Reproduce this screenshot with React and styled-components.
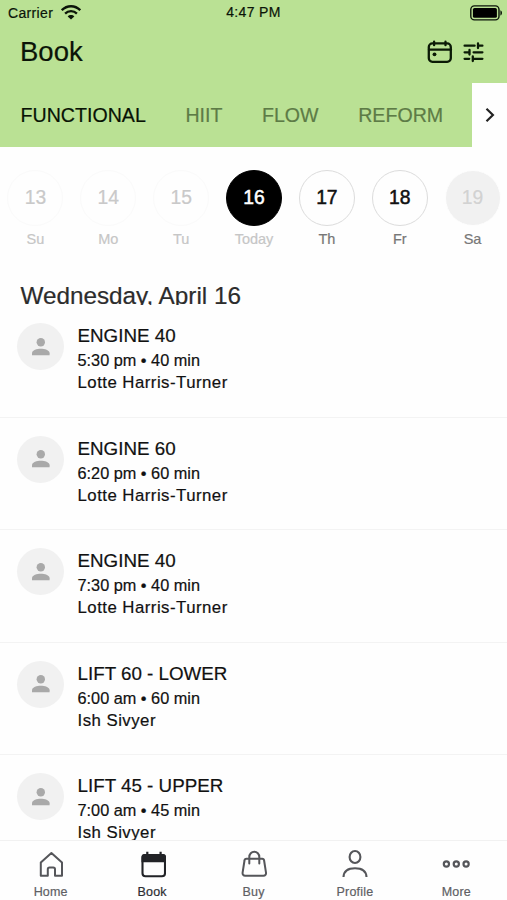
import React from 'react';
import styled, { createGlobalStyle } from 'styled-components';

const tabs = [
  { label: 'FUNCTIONAL', active: true },
  { label: 'HIIT' },
  { label: 'FLOW' },
  { label: 'REFORM' },
];

const days = [
  { date: 13, label: 'Su', variant: 'past' },
  { date: 14, label: 'Mo', variant: 'past' },
  { date: 15, label: 'Tu', variant: 'past' },
  { date: 16, label: 'Today', variant: 'selected' },
  { date: 17, label: 'Th', variant: 'open' },
  { date: 18, label: 'Fr', variant: 'open' },
  { date: 19, label: 'Sa', variant: 'closed' },
];

const classes = [
  { title: 'ENGINE 40', time: '5:30 pm • 40 min', coach: 'Lotte Harris-Turner' },
  { title: 'ENGINE 60', time: '6:20 pm • 60 min', coach: 'Lotte Harris-Turner' },
  { title: 'ENGINE 40', time: '7:30 pm • 40 min', coach: 'Lotte Harris-Turner' },
  { title: 'LIFT 60 - LOWER', time: '6:00 am • 60 min', coach: 'Ish Sivyer' },
  { title: 'LIFT 45 - UPPER', time: '7:00 am • 45 min', coach: 'Ish Sivyer' },
];

const WifiIcon = () => (
  <svg width="20" height="15" viewBox="0 0 20 15" fill="none" stroke="#0b1408" strokeWidth="2.3">
    <path d="M.8 5.2C6-.1 14-.1 19.2 5.2" />
    <path d="M4.1 8.6c3.3-3.3 8.5-3.3 11.8 0" />
    <path d="M10 14.6 6.7 11.4c1.7-1.8 4.9-1.8 6.6 0Z" fill="#0b1408" stroke="none" />
  </svg>
);

const BatteryIcon = () => (
  <svg width="33" height="16" viewBox="0 0 33 16">
    <rect x=".8" y=".9" width="28.2" height="14" rx="3.6" fill="none" stroke="#0b1408" strokeWidth="1.4" />
    <rect x="2.9" y="3" width="24" height="9.8" rx="1.6" fill="#000" />
    <path d="M30.4 5.2c2.1.7 2.1 4.7 0 5.4Z" fill="#0b1408" />
  </svg>
);

const CalendarIcon = () => (
  <svg width="26" height="24" viewBox="0 0 26 24" fill="none" stroke="#0b1a06" strokeWidth="2.3" strokeLinecap="round">
    <rect x="1.8" y="3.4" width="22" height="18.4" rx="3.6" />
    <path d="M2 9.7h22M7.1 1.7v3.5M18.5 1.7v3.5" />
    <circle cx="7.5" cy="14.3" r="1.9" fill="#0b1a06" stroke="none" />
  </svg>
);

const FilterIcon = () => (
  <svg width="21" height="21" viewBox="0 0 21 21" fill="none" stroke="#0b1a06" strokeWidth="2.3" strokeLinecap="round">
    <path d="M1.6 3.7h10M15 1.4v4.6M15 3.7h4.4" />
    <path d="M1.6 10.3h4.6M6.5 8v4.6M10.6 10.3h8.8" />
    <path d="M1.6 16.8h4.6M9.8 14.5v4.6M9.8 16.8h9.6" />
  </svg>
);

const ChevronIcon = () => (
  <svg width="12" height="16" viewBox="0 0 12 16" fill="none" stroke="#222" strokeWidth="2.2">
    <path d="m2.5 1.8 6.4 6.2-6.4 6.2" />
  </svg>
);

const PersonIcon = () => (
  <svg width="18" height="18" viewBox="0 0 18 18" fill="#a9a9a9">
    <circle cx="8.8" cy="4.2" r="4.2" />
    <path d="M0 17.2V15.2c0-3 5-4.4 8.8-4.4s8.8 1.4 8.8 4.4v2Z" />
  </svg>
);

const HomeIcon = () => (
  <svg width="28" height="30" viewBox="0 0 28 30" fill="none" stroke="#55565a" strokeWidth="2" strokeLinejoin="round">
    <path d="M3.8 13.6 14.4 4 25 13.600v13.200h-7v-6.600c0-1.200-.6-1.800-1.800-1.800h-3.600c-1.200 0-1.800.6-1.800 1.800v6.600h-7Z" />
  </svg>
);

const BookIcon = () => (
  <svg width="28" height="30" viewBox="0 0 28 30">
    <path d="M9.300 2.800v5M22.600 2.800v5" stroke="#222327" strokeWidth="2.2" />
    <path d="M3.500 13.200V8a3 3 0 0 1 3-3H25a3 3 0 0 1 3 3v5.200Z" fill="#222327" />
    <rect x="4.500" y="6" width="22.500" height="21.200" rx="3" fill="none" stroke="#222327" strokeWidth="2.1" />
  </svg>
);

const BuyIcon = () => (
  <svg width="28" height="30" viewBox="0 0 28 30" fill="none" stroke="#55565a" strokeWidth="2" strokeLinecap="round">
    <path d="M6.400 9.800h15.800c1 0 1.800.7 1.900 1.700l1.900 12.200c.2 1.800-.8 3-2.500 3H5.100c-1.700 0-2.700-1.200-2.500-3l1.900-12.200c.1-1 .9-1.700 1.900-1.700Z" />
    <path d="M9.300 14.500V8a5 5.300 0 0 1 10 0v6.500" />
  </svg>
);

const ProfileIcon = () => (
  <svg width="28" height="30" viewBox="0 0 28 30" fill="none" stroke="#55565a" strokeWidth="2.1">
    <ellipse cx="14" cy="8" rx="5.4" ry="6" />
    <path d="M2.500 28c.3-5.800 4.200-8.700 11.500-8.700S25.200 22.200 25.500 28" />
  </svg>
);

const MoreIcon = () => (
  <svg width="28" height="30" viewBox="0 0 28 30" fill="none" stroke="#55565a" strokeWidth="2.2">
    <circle cx="4.4" cy="15" r="2.6" />
    <circle cx="14.3" cy="15" r="2.6" />
    <circle cx="24.1" cy="15" r="2.6" />
  </svg>
);

const navItems = [
  { label: 'Home', Icon: HomeIcon },
  { label: 'Book', Icon: BookIcon, active: true },
  { label: 'Buy', Icon: BuyIcon },
  { label: 'Profile', Icon: ProfileIcon },
  { label: 'More', Icon: MoreIcon },
];

function App() {
  return (
    <Screen>
      <GlobalStyle />
      <Header>
        <StatusBar>
          <Carrier>
            <span>Carrier</span>
            <WifiIcon />
          </Carrier>
          <Clock>4:47 PM</Clock>
          <Battery>
            <BatteryIcon />
          </Battery>
        </StatusBar>
        <TitleBar>
          <Title>Book</Title>
          <Actions>
            <CalendarIcon />
            <FilterIcon />
          </Actions>
        </TitleBar>
        <TabBar>
          <Tabs>
            {tabs.map(({ label, active }) => (
              <Tab key={label} $active={active}>{label}</Tab>
            ))}
          </Tabs>
          <NextButton aria-label="More categories">
            <ChevronIcon />
          </NextButton>
        </TabBar>
      </Header>

      <Week>
        {days.map(({ date, label, variant }) => (
          <Day key={date}>
            <DayCircle $variant={variant}>{date}</DayCircle>
            <DayLabel $variant={variant}>{label}</DayLabel>
          </Day>
        ))}
      </Week>

      <DateHeading>Wednesday, April 16</DateHeading>

      <ClassList>
        {classes.map(({ title, time, coach }, index) => (
          <ClassRow key={index}>
            <Avatar>
              <PersonIcon />
            </Avatar>
            <div>
              <ClassTitle>{title}</ClassTitle>
              <ClassTime>{time}</ClassTime>
              <Coach>{coach}</Coach>
            </div>
          </ClassRow>
        ))}
      </ClassList>

      <BottomNav>
        {navItems.map(({ label, Icon, active }) => (
          <NavItem key={label} $active={active}>
            <Icon />
            {label}
          </NavItem>
        ))}
      </BottomNav>
    </Screen>
  );
}

const GlobalStyle = createGlobalStyle`
  * {
    box-sizing: border-box;
  }

  body {
    margin: 0;
    background: #fefefe;
    font-family: 'Liberation Sans', Arial, sans-serif;
    -webkit-text-stroke: 0.2px;
  }

  svg {
    display: block;
    flex-shrink: 0;
  }
`;

const Screen = styled.div`
  width: 100%;
  height: 900px;
  display: flex;
  flex-direction: column;
  overflow: hidden;
`;

const Header = styled.header`
  height: 147px;
  flex-shrink: 0;
  background: #bae194;
  color: #0b1408;
`;

const StatusBar = styled.div`
  height: 24px;
  display: grid;
  grid-template-columns: 1fr auto 1fr;
  align-items: center;
  padding: 1px 4px 0 8px;
  font-size: 14px;
  letter-spacing: 0.35px;
`;

const Carrier = styled.div`
  display: flex;
  align-items: center;
  gap: 8px;
`;

const Clock = styled.span`
  padding: 0 4px 2px 0;
  line-height: 14px;
`;

const Battery = styled.div`
  display: flex;
  justify-content: flex-end;
`;

const TitleBar = styled.div`
  height: 59px;
  display: flex;
  justify-content: space-between;
  padding: 12px 23px 0 20px;
`;

const Title = styled.h1`
  margin: 0;
  font-size: 27.5px;
  line-height: 32px;
  font-weight: 400;
`;

const Actions = styled.div`
  height: 32px;
  display: flex;
  align-items: center;
  gap: 10px;
`;

const TabBar = styled.nav`
  height: 64px;
  display: flex;
  justify-content: space-between;
`;

const Tabs = styled.div`
  display: flex;
  align-items: center;
  gap: 39.6px;
  padding-left: 20.6px;
`;

const Tab = styled.span`
  font-size: 19.6px;
  color: ${({ $active }) => ($active ? '#081204' : '#5d7b46')};
`;

const NextButton = styled.button`
  width: 35px;
  display: flex;
  align-items: center;
  justify-content: center;
  padding: 0;
  border: none;
  background: #fefefe;
`;

const Week = styled.div`
  display: flex;
  flex-shrink: 0;
  height: 133px;
  margin: 0 -2px 0 -1px;
  padding-top: 23px;
`;

const Day = styled.div`
  flex: 1;
  display: flex;
  flex-direction: column;
  align-items: center;
`;

const circleStyles = {
  past: 'color: #c9c9c9; border-color: #fafafa;',
  selected: 'color: #fff; border-color: #000; background: #000;',
  open: 'color: #111; border-color: #dcdcdc;',
  closed: 'color: #d2d2d2; border-color: #fefefe; background: #f1f1f1;',
};

const labelColors = {
  past: '#c6c6c6',
  selected: '#c6c6c6',
  open: '#777',
  closed: '#777',
};

const DayCircle = styled.div`
  width: 56px;
  height: 56px;
  display: flex;
  align-items: center;
  justify-content: center;
  border: 1px solid;
  border-radius: 50%;
  font-size: 19.3px;
  ${({ $variant }) => circleStyles[$variant]}
  ${({ $variant }) => ($variant === 'open' || $variant === 'selected') && '-webkit-text-stroke: 0.5px;'}
`;

const DayLabel = styled.div`
  margin-top: 4px;
  font-size: 14.5px;
  line-height: 18px;
  color: ${({ $variant }) => labelColors[$variant]};
`;

const DateHeading = styled.h2`
  flex-shrink: 0;
  height: 25px;
  margin: 0;
  padding-left: 20.4px;
  overflow: hidden;
  font-size: 24.3px;
  line-height: 31px;
  font-weight: 400;
  color: #2c2c2c;
`;

const ClassList = styled.div`
  flex: 1;
  min-height: 0;
  overflow: hidden;
`;

const ClassRow = styled.div`
  height: 112.5px;
  display: flex;
  gap: 13.5px;
  padding: 18px 17px 0;
  border-bottom: 1px solid #f3f3f3;
  color: #111;
`;

const Avatar = styled.div`
  width: 47px;
  height: 47px;
  display: flex;
  align-items: center;
  justify-content: center;
  border-radius: 50%;
  background: #f1f1f1;
`;

const ClassTitle = styled.div`
  font-size: 18.8px;
  line-height: 26.4px;
`;

const ClassTime = styled.div`
  font-size: 16.3px;
  line-height: 22.6px;
`;

const Coach = styled.div`
  font-size: 16.8px;
  line-height: 22px;
  letter-spacing: 0.48px;
`;

const BottomNav = styled.nav`
  flex-shrink: 0;
  height: 60px;
  display: flex;
  border-top: 1px solid #f1f1f1;
`;

const NavItem = styled.div`
  flex: 1;
  display: flex;
  flex-direction: column;
  align-items: center;
  padding-top: 8px;
  font-size: 12.5px;
  line-height: 26px;
  letter-spacing: 0.2px;
  color: ${({ $active }) => ($active ? '#2d2d31' : '#606064')};
`;

export default App;
